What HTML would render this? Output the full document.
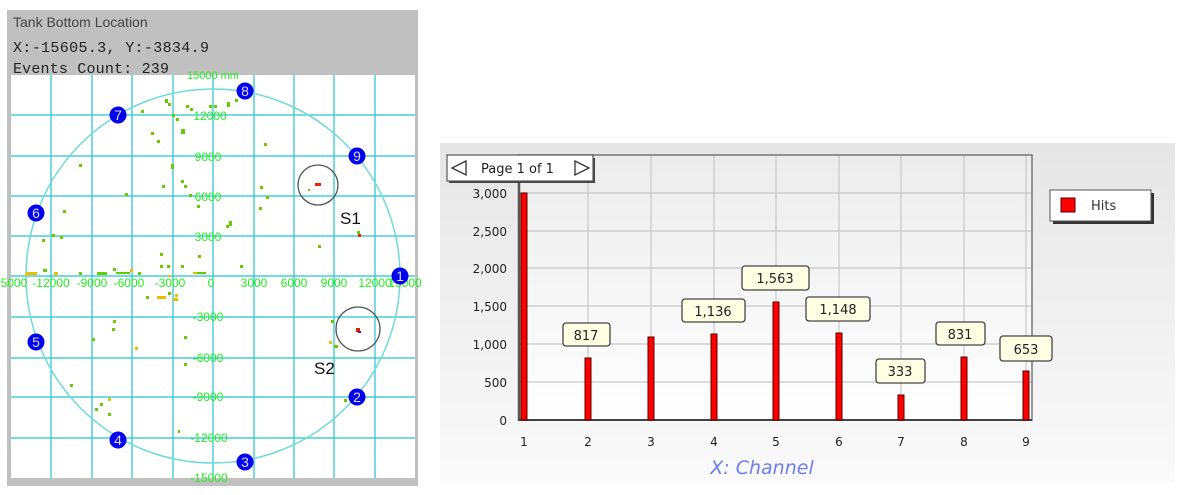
<!DOCTYPE html>
<html><head><meta charset="utf-8"><style>
html,body{margin:0;padding:0;background:#fff;width:1185px;height:495px;overflow:hidden}
svg{display:block}
</style></head><body>
<svg width="1185" height="495" viewBox="0 0 1185 495" xmlns="http://www.w3.org/2000/svg">
<defs>
<linearGradient id="bg" x1="0" y1="0" x2="0" y2="1"><stop offset="0" stop-color="#e6e6e6"/><stop offset="1" stop-color="#fafafa"/></linearGradient>
<linearGradient id="pg" x1="0" y1="0" x2="0" y2="1"><stop offset="0" stop-color="#ececec"/><stop offset="1" stop-color="#ffffff"/></linearGradient>
</defs>
<rect x="7" y="10" width="411" height="476" fill="#c0c0c0"/>
<rect x="11" y="75" width="404" height="403" fill="#fff"/>
<text x="13" y="27" font-family="Liberation Sans, sans-serif" font-size="14" fill="#444">Tank Bottom Location</text>
<text x="13" y="52" font-family="Liberation Mono, monospace" font-size="15" fill="#222" textLength="196">X:-15605.3, Y:-3834.9</text>
<text x="13" y="73" font-family="Liberation Mono, monospace" font-size="15" fill="#222" textLength="156">Events Count: 239</text>
<g stroke="#22c5cc" stroke-width="1.2">
<line x1="51" y1="75" x2="51" y2="478"/><line x1="92" y1="75" x2="92" y2="478"/><line x1="132" y1="75" x2="132" y2="478"/><line x1="173" y1="75" x2="173" y2="478"/><line x1="213" y1="75" x2="213" y2="478"/><line x1="254" y1="75" x2="254" y2="478"/><line x1="294" y1="75" x2="294" y2="478"/><line x1="334" y1="75" x2="334" y2="478"/><line x1="375" y1="75" x2="375" y2="478"/>
<line x1="11" y1="115" x2="415" y2="115"/><line x1="11" y1="156" x2="415" y2="156"/><line x1="11" y1="196" x2="415" y2="196"/><line x1="11" y1="236" x2="415" y2="236"/><line x1="11" y1="276" x2="415" y2="276"/><line x1="11" y1="317" x2="415" y2="317"/><line x1="11" y1="358" x2="415" y2="358"/><line x1="11" y1="397" x2="415" y2="397"/><line x1="11" y1="438" x2="415" y2="438"/>
</g>
<circle cx="213" cy="276" r="187" fill="none" stroke="#70dada" stroke-width="1.5"/>
<g font-family="Liberation Sans, sans-serif" font-size="12" fill="#22ee22" text-anchor="middle">
<text x="213" y="79" font-size="11">15000 mm</text><text x="210" y="120">12000</text><text x="208" y="161">9000</text><text x="208" y="201">6000</text><text x="208" y="241">3000</text>
<text x="208" y="321">-3000</text><text x="208" y="362">-6000</text><text x="208" y="401">-9000</text><text x="209" y="442">-12000</text><text x="209" y="482">-15000</text>
<text x="14" y="287">5000</text><text x="51" y="287">-12000</text><text x="92" y="287">-9000</text><text x="129" y="287">-6000</text><text x="170" y="287">-3000</text><text x="211" y="287">0</text>
<text x="254" y="287">3000</text><text x="294" y="287">6000</text><text x="334" y="287">9000</text><text x="375" y="287">12000</text><text x="405" y="287">15000</text>
</g>
<g fill="#66cc00">
<rect x="141" y="110" width="3" height="3"/><rect x="165" y="99" width="3" height="4"/><rect x="168" y="103" width="3" height="3"/><rect x="172" y="114" width="3" height="3"/><rect x="176" y="118" width="3" height="3"/><rect x="151" y="132" width="3" height="3"/><rect x="157" y="140" width="3" height="3"/><rect x="181" y="129" width="4" height="5"/><rect x="186" y="105" width="3" height="3"/><rect x="190" y="108" width="3" height="3"/><rect x="209" y="105" width="3" height="3"/><rect x="214" y="105" width="3" height="3"/><rect x="227" y="102" width="3" height="5"/><rect x="235" y="99" width="3" height="3"/><rect x="264" y="143" width="3" height="3"/><rect x="79" y="164" width="3" height="3"/><rect x="171" y="164" width="3" height="5"/><rect x="181" y="180" width="3" height="3"/><rect x="184" y="185" width="3" height="3"/><rect x="189" y="194" width="3" height="3"/><rect x="162" y="185" width="3" height="3"/><rect x="125" y="193" width="3" height="3"/><rect x="260" y="186" width="3" height="3"/><rect x="266" y="196" width="3" height="3"/><rect x="259" y="207" width="3" height="3"/><rect x="197" y="205" width="3" height="3"/><rect x="229" y="221" width="3" height="5"/><rect x="226" y="225" width="3" height="3"/><rect x="63" y="210" width="3" height="3"/><rect x="42" y="239" width="3" height="3"/><rect x="52" y="234" width="3" height="3"/><rect x="60" y="236" width="3" height="3"/><rect x="318" y="245" width="3" height="3"/><rect x="308" y="189" width="2" height="2"/><rect x="357" y="231" width="3" height="3"/>
<rect x="160" y="253" width="3" height="3"/><rect x="198" y="255" width="3" height="3"/><rect x="160" y="265" width="3" height="3"/><rect x="167" y="265" width="3" height="3"/><rect x="181" y="265" width="3" height="3"/><rect x="240" y="265" width="3" height="3"/><rect x="43" y="269" width="4" height="3"/><rect x="79" y="272" width="3" height="3"/><rect x="97" y="272" width="10" height="3"/><rect x="113" y="268" width="3" height="3"/><rect x="116" y="272" width="14" height="2"/><rect x="138" y="272" width="3" height="3"/><rect x="197" y="272" width="9" height="2"/><rect x="146" y="296" width="3" height="3"/><rect x="168" y="292" width="3" height="3"/><rect x="113" y="320" width="3" height="3"/><rect x="112" y="328" width="3" height="3"/><rect x="92" y="338" width="3" height="3"/><rect x="184" y="336" width="3" height="3"/><rect x="184" y="363" width="3" height="3"/><rect x="70" y="384" width="3" height="3"/><rect x="108" y="398" width="3" height="3"/><rect x="100" y="403" width="3" height="3"/><rect x="95" y="408" width="3" height="3"/><rect x="108" y="413" width="3" height="3"/><rect x="178" y="430" width="2" height="3"/><rect x="331" y="320" width="3" height="3"/><rect x="344" y="399" width="3" height="3"/><rect x="334" y="345" width="4" height="3"/>
</g>
<g fill="#e8c000">
<rect x="27" y="272" width="10" height="3"/><rect x="54" y="272" width="4" height="3"/><rect x="130" y="269" width="3" height="3"/><rect x="157" y="296" width="9" height="3"/><rect x="173" y="298" width="5" height="3"/><rect x="175" y="294" width="3" height="3"/><rect x="168" y="275" width="3" height="2"/><rect x="193" y="272" width="4" height="2"/><rect x="135" y="347" width="3" height="3"/><rect x="108" y="398" width="3" height="3"/><rect x="329" y="341" width="3" height="3"/><rect x="25" y="273" width="3" height="3"/>
</g>
<rect x="315" y="183" width="6" height="3" fill="#ee2200"/>
<rect x="358" y="234" width="3" height="3" fill="#ee2200"/>
<rect x="356" y="328" width="4" height="4" fill="#dd2200"/><rect x="358" y="331" width="3" height="2" fill="#8800aa"/>
<circle cx="318" cy="185" r="20" fill="none" stroke="#555" stroke-width="1.3"/>
<circle cx="358" cy="329" r="22" fill="none" stroke="#555" stroke-width="1.3"/>
<g font-family="Liberation Sans, sans-serif" font-size="17" fill="#111"><text x="340" y="224">S1</text><text x="314" y="374">S2</text></g>
<g fill="#0000ee"><circle cx="400" cy="276" r="8.5"/><circle cx="357" cy="397" r="8.5"/><circle cx="245" cy="462" r="8.5"/><circle cx="118" cy="440" r="8.5"/><circle cx="36" cy="342" r="8.5"/><circle cx="36" cy="213" r="8.5"/><circle cx="118" cy="115" r="8.5"/><circle cx="245" cy="91" r="8.5"/><circle cx="357" cy="156" r="8.5"/></g>
<g font-family="Liberation Sans, sans-serif" font-size="14" fill="#dde" text-anchor="middle">
<text x="400" y="281">1</text><text x="357" y="402">2</text><text x="245" y="467">3</text><text x="118" y="445">4</text><text x="36" y="347">5</text><text x="36" y="218">6</text><text x="118" y="120">7</text><text x="245" y="96">8</text><text x="357" y="161">9</text>
</g>
<rect x="440" y="143" width="735" height="340" fill="url(#bg)"/>
<rect x="519" y="155" width="513" height="265" fill="url(#pg)"/>
<g stroke="#c8c8c8" stroke-width="1.2">
<line x1="588" y1="155" x2="588" y2="420"/><line x1="651" y1="155" x2="651" y2="420"/><line x1="714" y1="155" x2="714" y2="420"/><line x1="776" y1="155" x2="776" y2="420"/><line x1="839" y1="155" x2="839" y2="420"/><line x1="901" y1="155" x2="901" y2="420"/><line x1="964" y1="155" x2="964" y2="420"/><line x1="1026" y1="155" x2="1026" y2="420"/>
<line x1="519" y1="193" x2="1032" y2="193"/><line x1="519" y1="231" x2="1032" y2="231"/><line x1="519" y1="268" x2="1032" y2="268"/><line x1="519" y1="306" x2="1032" y2="306"/><line x1="519" y1="344" x2="1032" y2="344"/><line x1="519" y1="382" x2="1032" y2="382"/>
</g>
<rect x="519" y="155" width="513" height="265" fill="none" stroke="#777" stroke-width="1.5"/>
<line x1="519" y1="155" x2="519" y2="421" stroke="#555" stroke-width="2.5"/>
<line x1="518" y1="420" x2="1032" y2="420" stroke="#444" stroke-width="2"/>
<g font-family="DejaVu Sans, sans-serif" font-size="12" fill="#222" text-anchor="end">
<text x="507" y="198">3,000</text><text x="507" y="236">2,500</text><text x="507" y="273">2,000</text><text x="507" y="311">1,500</text><text x="507" y="349">1,000</text><text x="507" y="387">500</text><text x="507" y="425">0</text>
</g>
<g font-family="DejaVu Sans, sans-serif" font-size="12" fill="#222" text-anchor="middle">
<text x="524" y="446">1</text><text x="588" y="446">2</text><text x="651" y="446">3</text><text x="714" y="446">4</text><text x="776" y="446">5</text><text x="839" y="446">6</text><text x="901" y="446">7</text><text x="964" y="446">8</text><text x="1026" y="446">9</text>
</g>
<g fill="#ff0000" stroke="#500" stroke-width="1">
<rect x="521" y="193" width="6" height="227"/><rect x="585" y="358" width="6" height="62"/><rect x="648" y="337" width="6" height="83"/><rect x="711" y="334" width="6" height="86"/><rect x="773" y="302" width="6" height="118"/><rect x="836" y="333" width="6" height="87"/><rect x="898" y="395" width="6" height="25"/><rect x="961" y="357" width="6" height="63"/><rect x="1023" y="371" width="6" height="49"/>
</g>
<g fill="#ffffe4" stroke="#444" stroke-width="1.3">
<rect x="563" y="323" width="47" height="23" rx="3"/><rect x="682" y="299" width="63" height="23" rx="3"/><rect x="742" y="266" width="67" height="24" rx="3"/><rect x="806" y="297" width="64" height="24" rx="3"/><rect x="876" y="359" width="49" height="24" rx="3"/><rect x="936" y="322" width="49" height="23" rx="3"/><rect x="1000" y="336" width="52" height="25" rx="3"/>
</g>
<g font-family="DejaVu Sans, sans-serif" font-size="13" fill="#222" text-anchor="middle">
<text x="586" y="340">817</text><text x="713" y="316">1,136</text><text x="775" y="283">1,563</text><text x="838" y="314">1,148</text><text x="900" y="376">333</text><text x="960" y="339">831</text><text x="1026" y="354">653</text>
</g>
<text x="762" y="474" font-family="DejaVu Sans, sans-serif" font-style="italic" font-size="19" fill="#6e7ef0" text-anchor="middle">X: Channel</text>
<rect x="449" y="158" width="146" height="25" fill="#444"/>
<rect x="447" y="155" width="146" height="26" fill="#fff" stroke="#555" stroke-width="1.2"/>
<path d="M466 161 L452 168 L466 175 Z" fill="none" stroke="#333" stroke-width="1.3"/>
<path d="M575 161 L589 168 L575 175 Z" fill="none" stroke="#333" stroke-width="1.3"/>
<text x="481" y="173" font-family="DejaVu Sans, sans-serif" font-size="13" fill="#222">Page 1 of 1</text>
<rect x="1053" y="193" width="101" height="31" fill="#333"/>
<rect x="1050" y="190" width="101" height="31" fill="#fff" stroke="#555" stroke-width="1"/>
<rect x="1061" y="198" width="14" height="14" fill="#f00" stroke="#500"/>
<text x="1091" y="210" font-family="DejaVu Sans, sans-serif" font-size="13" fill="#333">Hits</text>
</svg>
</body></html>
